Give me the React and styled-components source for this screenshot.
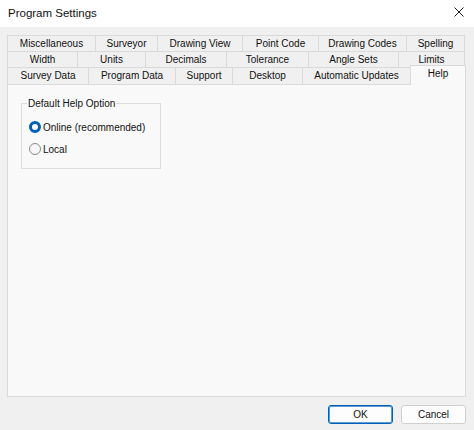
import styled, { createGlobalStyle } from "styled-components";
import { useState } from "react";

const GlobalStyle = createGlobalStyle`
  html, body {
    margin: 0;
    padding: 0;
    background: #f0f0f0;
  }
  body {
    font-family: "Liberation Sans", Arial, sans-serif;
    font-size: 10px;
    color: #111111;
  }
`;

const tabRows = [
  [
    { label: "Miscellaneous", w: 89 },
    { label: "Surveyor", w: 63 },
    { label: "Drawing View", w: 86 },
    { label: "Point Code", w: 77 },
    { label: "Drawing Codes", w: 89 },
    { label: "Spelling", w: 59 },
  ],
  [
    { label: "Width", w: 71 },
    { label: "Units", w: 69 },
    { label: "Decimals", w: 82 },
    { label: "Tolerance", w: 83 },
    { label: "Angle Sets", w: 91 },
    { label: "Limits", w: 67 },
  ],
  [
    { label: "Survey Data", w: 82 },
    { label: "Program Data", w: 88 },
    { label: "Support", w: 58 },
    { label: "Desktop", w: 71 },
    { label: "Automatic Updates", w: 109 },
    { label: "Help", w: 56 },
  ],
];

const App = () => {
  const [option, setOption] = useState("online");

  return (
    <>
      <GlobalStyle />
      <Window>
        <TitleBar>
          <Title>Program Settings</Title>
          <CloseButton>
            <svg width="10" height="10" viewBox="0 0 10 10">
              <path d="M0.5 0.5 L9.5 9.5 M9.5 0.5 L0.5 9.5" stroke="#1a1a1a" strokeWidth="1" />
            </svg>
          </CloseButton>
        </TitleBar>
        <Body>
          <Tabs>
            {tabRows.map((row, i) => (
              <TabRow key={i}>
                {row.map((t) => (
                  <Tab key={t.label} $w={t.w} $active={t.label === "Help"}>
                    {t.label}
                  </Tab>
                ))}
              </TabRow>
            ))}
          </Tabs>
          <Panel>
            <GroupBox>
              <Legend>Default Help Option</Legend>
              <RadioRow onClick={() => setOption("online")}>
                <RadioCircle $checked={option === "online"} />
                Online (recommended)
              </RadioRow>
              <RadioRow onClick={() => setOption("local")}>
                <RadioCircle $checked={option === "local"} />
                Local
              </RadioRow>
            </GroupBox>
          </Panel>
          <Footer>
            <Button $default>OK</Button>
            <Button>Cancel</Button>
          </Footer>
        </Body>
      </Window>
    </>
  );
};

export default App;

const Window = styled.div`
  width: 474px;
  height: 430px;
  display: flex;
  flex-direction: column;
  box-sizing: border-box;
  background: #f0f0f0;
  overflow: hidden;
`;

const TitleBar = styled.div`
  height: 27px;
  flex-shrink: 0;
  background: #ffffff;
  display: flex;
  align-items: center;
  justify-content: space-between;
  padding: 0 0 1px 8px;
  box-sizing: border-box;
`;

const Title = styled.div`
  font-size: 11.5px;
  color: #111111;
`;

const CloseButton = styled.div`
  width: 30px;
  height: 26px;
  display: flex;
  align-items: center;
  justify-content: center;
  margin-top: -2px;
`;

const Body = styled.div`
  flex: 1;
  display: flex;
  flex-direction: column;
  padding: 8px 8px 0 7px;
`;

const Tabs = styled.div`
  display: flex;
  flex-direction: column;
  width: 459px;
  position: relative;
  z-index: 1;
`;

const TabRow = styled.div`
  display: flex;
  height: 16px;
  &:last-child {
    height: 17px;
  }
`;

const Tab = styled.div`
  width: ${(p) => p.$w}px;
  flex-shrink: 0;
  box-sizing: border-box;
  border: 1px solid #dadada;
  border-bottom: none;
  margin-left: -1px;
  &:first-child {
    margin-left: 0;
  }
  display: flex;
  align-items: center;
  justify-content: center;
  font-size: 10px;
  line-height: 12px;
  color: #111111;
  white-space: nowrap;
  background: ${(p) => (p.$active ? "#f9f9f9" : "#f0f0f0")};
  ${(p) =>
    p.$active &&
    `
    margin-top: -2px;
    height: 20px;
    padding-bottom: 4px;
  `}
`;

const Panel = styled.div`
  height: 313px;
  width: 459px;
  box-sizing: border-box;
  border: 1px solid #dadada;
  background: #f9f9f9;
  padding: 13px 0 0 13px;
`;

const GroupBox = styled.fieldset`
  width: 140px;
  height: 71px;
  box-sizing: border-box;
  margin: 0;
  border: 1px solid #dcdcdc;
  border-radius: 0;
  padding: 10px 0 0 7px;
  display: flex;
  flex-direction: column;
  gap: 6px;
`;

const Legend = styled.legend`
  padding: 0 1px;
  margin-left: -2px;
  font-size: 10px;
  color: #111111;
`;

const RadioRow = styled.div`
  display: flex;
  align-items: center;
  gap: 2px;
  height: 16px;
  font-size: 10px;
  color: #111111;
  white-space: nowrap;
  cursor: default;
`;

const RadioCircle = styled.span`
  width: 12px;
  height: 12px;
  box-sizing: border-box;
  border-radius: 50%;
  flex-shrink: 0;
  ${(p) =>
    p.$checked
      ? `
    background: #ffffff;
    border: 3.5px solid #005fb8;
  `
      : `
    background: #f7f7f7;
    border: 1px solid #8a8a8a;
  `}
`;

const Footer = styled.div`
  display: flex;
  justify-content: flex-end;
  gap: 8px;
  padding: 8px 0 0;
`;

const Button = styled.button`
  width: 65px;
  height: 19px;
  box-sizing: border-box;
  font-family: "Liberation Sans", Arial, sans-serif;
  font-size: 10px;
  line-height: 1;
  padding: 0;
  color: #111111;
  background: #fdfdfd;
  border: 1px solid ${(p) => (p.$default ? "#005fb8" : "#d0d0d0")};
  box-shadow: ${(p) => (p.$default ? "inset 0 0 0 1px #5b9bd5" : "none")};
  border-radius: 3px;
`;
